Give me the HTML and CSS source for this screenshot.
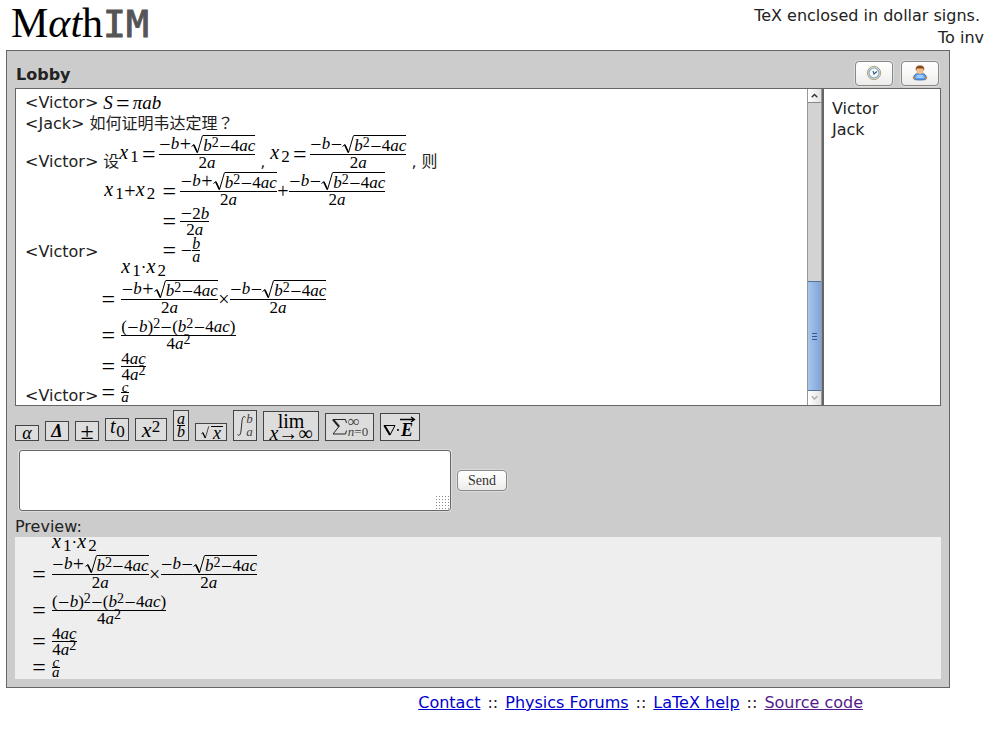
FILE: index.html
```html
<!DOCTYPE html>
<html lang="en">
<head>
<meta charset="utf-8">
<title>MathIM</title>
<link rel="stylesheet" href="styles.css">
</head>
<body>
<svg class="defs" aria-hidden="true">
  <symbol id="surd" viewBox="0 0 12 19"><path d="M0.5 11.5 3 9.5 6.5 17.5 11.5 0.5" fill="none" stroke="#000" stroke-width="1"/><path d="M2.8 10 6.3 17.5" stroke="#000" stroke-width="1.6"/></symbol>
</svg>
<header class="top">
  <h1 class="logo">M<i>αt</i>h<span class="im">IM</span></h1>
  <p class="tips"><span class="tip">TeX enclosed in dollar signs.</span><span>To inv</span></p>
</header>

<main class="panel">
  <div class="bar">
    <h2>Lobby</h2>
    <button class="btn icon" type="button" aria-label="Timestamps">
      <svg width="16" height="16" viewBox="0 0 16 16"><circle cx="8" cy="8" r="6.7" fill="#d8e6ee" stroke="#b9a274" stroke-width="1"/><circle cx="8" cy="8" r="5" fill="#f4fafd" stroke="#86a9bd" stroke-width="1.2"/><path d="M7 6 8 9 11 6.500" fill="none" stroke="#456" stroke-width="1.1"/></svg>
    </button>
    <button class="btn icon" type="button" aria-label="Nickname">
      <svg width="16" height="16" viewBox="0 0 16 16"><path d="M1.500 13C1.500 10 4 8.500 6 8.500h4c2 0 4.500 1.500 4.500 4.500 0 1.500-2 2-6.500 2s-6.500-.5-6.500-2z" fill="#5a9bea" stroke="#2f62ae" stroke-width=".8"/><path d="M5 10h6l1 3H4z" fill="#9accff"/><circle cx="2" cy="13" r="1.300" fill="#c98a4c"/><circle cx="14" cy="13" r="1.300" fill="#c98a4c"/><rect x="4.500" y="2" width="7" height="7" rx="3" fill="#f0bd8c"/><path d="M4 6C3 2 5 .5 8 .5S13 2 12 6l-1-2.500H5z" fill="#8a4b17"/></svg>
    </button>
  </div>

  <div class="room">
    <div class="chat">
      <div class="log">
        <div class="msg"><span class="nick">&lt;Victor&gt;</span><span class="m large"><i>S</i><b class="eq">=</b><i>πab</i></span></div>
        <div class="msg"><span class="nick">&lt;Jack&gt;</span><span>如何证明韦达定理<span class="mark">？</span></span></div>
        <div class="msg tall"><span class="nick low">&lt;Victor&gt;</span><span class="low">设</span>
          <span class="m"><span class="v"><i>x</i><sub>1</sub></span><b class="eq">=</b><span class="frac"><span class="num"><b>−</b><i>b</i><b>+</b><svg class="surd"><use href="#surd"/></svg><span class="rad"><i>b</i><sup>2</sup><b>−</b>4<i>ac</i></span></span><span class="den">2<i>a</i></span></span></span>
          <span class="comma low">,</span>
          <span class="m"><span class="v"><i>x</i><sub>2</sub></span><b class="eq">=</b><span class="frac"><span class="num"><b>−</b><i>b</i><b>−</b><svg class="surd"><use href="#surd"/></svg><span class="rad"><i>b</i><sup>2</sup><b>−</b>4<i>ac</i></span></span><span class="den">2<i>a</i></span></span></span>
          <span class="comma low">,</span><span class="low">则</span>
        </div>
        <div class="msg block"><span class="nick">&lt;Victor&gt;</span>
          <div class="align sum">
            <span class="m h26"><span class="v"><i>x</i><sub>1</sub></span><b>+</b><span class="v"><i>x</i><sub>2</sub></span></span><b class="eq m">=</b>
            <span class="m h26"><span class="frac"><span class="num"><b>−</b><i>b</i><b>+</b><svg class="surd"><use href="#surd"/></svg><span class="rad"><i>b</i><sup>2</sup><b>−</b>4<i>ac</i></span></span><span class="den">2<i>a</i></span></span><b>+</b><span class="frac"><span class="num"><b>−</b><i>b</i><b>−</b><svg class="surd"><use href="#surd"/></svg><span class="rad"><i>b</i><sup>2</sup><b>−</b>4<i>ac</i></span></span><span class="den">2<i>a</i></span></span></span>
            <span></span><b class="eq m">=</b><span class="m h34"><span class="frac mid"><span class="num"><b>−</b>2<i>b</i></span><span class="den">2<i>a</i></span></span></span>
            <span></span><b class="eq m">=</b><span class="m h24"><b>−</b><span class="frac small"><span class="num"><i>b</i></span><span class="den"><i>a</i></span></span></span>
          </div>
        </div>
        <div class="msg block"><span class="nick">&lt;Victor&gt;</span>
          <div class="align">
            <span></span><span class="m h12"><span class="v"><i>x</i><sub>1</sub></span><span>·</span><span class="v"><i>x</i><sub>2</sub></span></span>
            <b class="eq m">=</b><span class="m h50"><span class="frac"><span class="num"><b>−</b><i>b</i><b>+</b><svg class="surd"><use href="#surd"/></svg><span class="rad"><i>b</i><sup>2</sup><b>−</b>4<i>ac</i></span></span><span class="den">2<i>a</i></span></span><b>×</b><span class="frac"><span class="num"><b>−</b><i>b</i><b>−</b><svg class="surd"><use href="#surd"/></svg><span class="rad"><i>b</i><sup>2</sup><b>−</b>4<i>ac</i></span></span><span class="den">2<i>a</i></span></span></span>
            <b class="eq m">=</b><span class="m h22"><span class="frac"><span class="num">(<b>−</b><i>b</i>)<sup>2</sup><b>−</b>(<i>b</i><sup>2</sup><b>−</b>4<i>ac</i>)</span><span class="den">4<i>a</i><sup>2</sup></span></span></span>
            <b class="eq m">=</b><span class="m h40"><span class="frac mid"><span class="num">4<i>ac</i></span><span class="den">4<i>a</i><sup>2</sup></span></span></span>
            <b class="eq m">=</b><span class="m h12"><span class="frac tiny"><span class="num"><i>c</i></span><span class="den"><i>a</i></span></span></span>
          </div>
        </div>
      </div>
      <div class="scroll" aria-hidden="true">
        <svg class="arrow up" viewBox="0 0 14 14"><path d="M4 9 7 6l3 3" fill="none" stroke="#333" stroke-width="1.5"/></svg>
        <div class="track"></div>
        <div class="thumb"></div>
        <svg class="arrow down" viewBox="0 0 14 14"><path d="M4 5l3 3 3-3" fill="none" stroke="#aaa" stroke-width="1.5"/></svg>
      </div>
    </div>
    <ul class="users"><li>Victor</li><li>Jack</li></ul>
  </div>

  <div class="symbols">
    <button class="w24 s16" type="button"><i>α</i></button>
    <button class="w24 s20" type="button"><i class="strong">Δ</i></button>
    <button class="w24 s20 big" type="button">±</button>
    <button class="w24 s23" type="button"><span class="v"><i>t</i><sub>0</sub></span></button>
    <button class="w32 s23 med" type="button"><i>x</i><sup>2</sup></button>
    <button class="w16 s31" type="button"><span class="frac small"><span class="num"><i>a</i></span><span class="den"><i>b</i></span></span></button>
    <button class="w32 s18" type="button"><svg class="surd short" preserveAspectRatio="none"><use href="#surd"/></svg><span class="rad short"><i>x</i></span></button>
    <button class="w24 s31" type="button"><svg width="9" height="22" viewBox="0 0 9 22"><path d="M8.500 2.500C7 0 5.500 2 5 6L4 16c-.5 4-2 5.500-3.500 3.500" fill="none" stroke="#333"/></svg><span class="limits"><i>b</i><i>a</i></span></button>
    <button class="w56 s30" type="button"><span class="lim"><span>lim</span><span class="to"><i>x</i>→∞</span></span></button>
    <button class="w49 s28" type="button"><svg width="17" height="18" viewBox="0 0 17 18"><path d="M15.500 5 14.500 1.500H2L8 8.500 2 16h12.500l1-3.500" fill="none" stroke="#222"/><path d="M2 1.500 8 8.500" stroke="#222" stroke-width="2"/></svg><span class="limits"><span class="inf">∞</span><span><i>n</i>=0</span></span></button>
    <button class="w40 s28" type="button"><svg width="36" height="24" viewBox="0 0 36 24"><path d="M2 10.500h11L8 20z" fill="none" stroke="#000"/><path d="M2.500 10.500 8 20" stroke="#000" stroke-width="2"/><path d="M15 15h2M18 4.500h14M29 2l3.500 2.500L29 7" fill="none" stroke="#000" stroke-width="1.300"/><text class="vec" x="19" y="21">E</text></svg></button>
  </div>

  <form class="compose">
    <textarea aria-label="Message"></textarea>
    <button class="btn send" type="button">Send</button>
  </form>

  <div class="label">Preview:</div>
  <div class="preview">
    <div class="align">
      <span></span><span class="m h12"><span class="v"><i>x</i><sub>1</sub></span><span>·</span><span class="v"><i>x</i><sub>2</sub></span></span>
      <b class="eq m">=</b><span class="m h50"><span class="frac"><span class="num"><b>−</b><i>b</i><b>+</b><svg class="surd"><use href="#surd"/></svg><span class="rad"><i>b</i><sup>2</sup><b>−</b>4<i>ac</i></span></span><span class="den">2<i>a</i></span></span><b>×</b><span class="frac"><span class="num"><b>−</b><i>b</i><b>−</b><svg class="surd"><use href="#surd"/></svg><span class="rad"><i>b</i><sup>2</sup><b>−</b>4<i>ac</i></span></span><span class="den">2<i>a</i></span></span></span>
      <b class="eq m">=</b><span class="m h22"><span class="frac"><span class="num">(<b>−</b><i>b</i>)<sup>2</sup><b>−</b>(<i>b</i><sup>2</sup><b>−</b>4<i>ac</i>)</span><span class="den">4<i>a</i><sup>2</sup></span></span></span>
      <b class="eq m">=</b><span class="m h40"><span class="frac mid"><span class="num">4<i>ac</i></span><span class="den">4<i>a</i><sup>2</sup></span></span></span>
      <b class="eq m">=</b><span class="m h12"><span class="frac tiny"><span class="num"><i>c</i></span><span class="den"><i>a</i></span></span></span>
    </div>
  </div>
</main>

<footer><a href="#contact">Contact</a><span>::</span><a href="#forums">Physics Forums</a><span>::</span><a href="#help">LaTeX help</a><span>::</span><a class="seen" href="#source">Source code</a></footer>
</body>
</html>
```
FILE: styles.css
```css
* { box-sizing: border-box; }
body {
  margin: 0;
  background: #fff;
  color: #222;
  font: 16px/21px "DejaVu Sans", "Noto Sans CJK SC", sans-serif;
  overflow: hidden;
}
h1, h2, p, ul { margin: 0; padding: 0; }
button { color: #000; padding: 0; }
.defs { display: none; }

/* header */
.top { display: flex; justify-content: space-between; height: 50px; }
.logo { padding-left: 11px; font: 42px/46px "Liberation Serif", serif; color: #000; }
.im { color: #555; font: 38px/46px "DejaVu Sans Mono", monospace; -webkit-text-stroke: 1px #555; }
.tips { display: flex; flex-direction: column; align-items: flex-end; padding-top: 5px; line-height: 22px; white-space: nowrap; }
.tip { padding-right: 4px; }

/* main panel */
.panel { margin: 0 34px 0 6px; padding: 0 8px 8px; border: 1px solid #666; background: #ccc; }
.bar { display: flex; gap: 8px; height: 37px; padding: 10px 2px 0 0; }
.bar h2 { flex: 1; padding: 3px 0 0 1px; font-size: 16px; line-height: 21px; }
.btn {
  border: 1px solid #888;
  border-radius: 4px;
  background: linear-gradient(#fff, #f8f8f7 50%, #ecebe9);
  box-shadow: 0 0 0 1px #dcdcdc;
}
.icon { display: flex; align-items: center; justify-content: center; width: 38px; height: 25px; }
.icon svg { margin-bottom: 2px; }

.room { display: grid; grid-template-columns: 1fr 118px; height: 318px; }
.chat { display: flex; border: 1px solid #666; background: #fff; overflow: hidden; }
.log { flex: 1; padding: 3px 0 0 9px; }
.users { list-style: none; padding: 9px 8px; border: 1px solid #666; background: #fff; }

.scroll { display: flex; flex-direction: column; width: 15px; border: 1px solid #999; border-width: 0 1px; }
.arrow { flex: none; width: 13px; height: 14px; background: linear-gradient(90deg, #fff, #e4e3e1); }
.up { border-bottom: 1px solid #888; }
.track { flex: 1; background: #d4d3d1; }
.thumb {
  height: 110px;
  border: 1px solid #557399;
  border-width: 1px 0;
  background:
    linear-gradient(#335a90, #335a90) center 51px / 5px 1px no-repeat,
    linear-gradient(#335a90, #335a90) center 54px / 5px 1px no-repeat,
    linear-gradient(#335a90, #335a90) center 57px / 5px 1px no-repeat,
    linear-gradient(90deg, #a8c6ed, #7ea4d9);
}

/* messages */
.msg { display: flex; align-items: center; height: 21px; white-space: nowrap; }
.nick { flex: none; margin-right: 5px; }
.mark { font-family: "Noto Sans CJK TC", sans-serif; line-height: 16px; }
.tall { height: 40px; margin-bottom: 4px; }
.low { padding-top: 14px; }
.comma { padding-left: 5px; width: 15px; }
.block { height: auto; align-items: flex-end; }
.block .nick { margin-right: 3px; }

/* formulas */
.m, .symbols { color: #000; font: 17px/16px "Liberation Serif", serif; }
.m { display: inline-flex; align-items: center; }
.m b, .m.eq { font-weight: normal; }
.m b { width: 12px; text-align: center; font-size: 20px; }
.large { font-size: 19px; }
.eq, .m .eq { font-size: 24px; font-weight: normal; width: 14px; justify-content: center; }
.m .eq { margin: 0 3px; }
.v { display: inline-flex; }
.v i { width: 11px; font-size: 20px; }
sub { font-size: 17px; line-height: 16px; padding-top: 5px; vertical-align: baseline; }
sup { font-size: 14px; line-height: 8px; vertical-align: baseline; align-self: flex-start; }
.frac { display: inline-grid; grid-template-rows: 19px 1px 19px; justify-items: center; }
.frac::before { content: ""; grid-row: 2; justify-self: stretch; background: #000; }
.num { grid-row: 1; align-self: end; display: flex; align-items: center; }
.den { grid-row: 3; display: flex; }
.num b { font-weight: normal; }
.mid { grid-template-rows: 15px 1px 15px; line-height: 15px; }
.small { grid-template-rows: 12px 1px 12px; font-size: 16px; line-height: 12px; }
.tiny { grid-template-rows: 9px 1px 9px; font-size: 15px; line-height: 9px; }
.rad { display: flex; align-items: center; height: 19px; padding-top: 2px; border-top: 1px solid #000; }
.rad sup, .num > sup { padding-top: 1px; }
.surd { width: 12px; height: 19px; flex: none; }
.align { display: grid; grid-template-columns: 14px auto; column-gap: 6px; justify-items: start; padding-bottom: 8px; }
.sum { grid-template-columns: 54px 14px auto; column-gap: 4px; padding: 0 0 0 3px; }
.h12 { height: 12px; } .h22 { height: 22px; } .h24 { height: 24px; } .h26 { height: 26px; }
.h34 { height: 34px; } .h40 { height: 40px; } .h50 { height: 50px; }
.align > .eq { align-self: center; height: 12px; }

/* symbol menu */
.symbols { display: flex; align-items: flex-end; gap: 6px; height: 35px; }
.symbols button {
  display: flex; align-items: center; justify-content: center;
  border: 1px solid #444; background: #ddd; font: 18px/14px "Liberation Serif", serif;
}
.w16 { width: 16px; } .w24 { width: 24px; } .w32 { width: 32px; } .w40 { width: 40px; } .w49 { width: 49px; } .w56 { width: 56px; }
.s16 { height: 16px; } .s18 { height: 18px; } .s20 { height: 20px; } .s23 { height: 23px; }
.s28 { height: 28px; } .s30 { height: 30px; } .s31 { height: 31px; }
.symbols .big { font-size: 24px; }
.symbols .med { font-size: 22px; }
.med sup { font-size: 17px; line-height: 16px; }
.strong { font-weight: bold; }
.symbols .v i { width: 7px; }
.surd.short { height: 13px; }
.rad.short { height: 13px; padding: 0 2px; }
.limits { display: flex; flex-direction: column; justify-content: space-between; align-self: stretch; padding: 3px 0; font-size: 13px; line-height: 10px; text-align: left; color: #444; }
.inf { font-size: 17px; }
.lim { display: flex; flex-direction: column; align-items: center; font-size: 20px; line-height: 14px; }
.to { font-size: 20px; line-height: 11px; }
.vec { font: italic bold 18px "Liberation Serif", serif; }

/* composer */
.compose { display: flex; align-items: center; gap: 6px; padding: 9px 4px 0; }
textarea { width: 432px; height: 61px; border: 1px solid #666; border-radius: 3px; background: #fff; box-shadow: 0 0 0 1px #ddd; resize: both; }
textarea::-webkit-resizer {
  background: conic-gradient(from 315deg at 100% 100%, transparent 0 0), radial-gradient(circle, #888 1px, transparent 1px) 0 0 / 3px 3px;
  clip-path: polygon(100% 0, 100% 100%, 0 100%);
}
.send { width: 50px; height: 21px; font: 14px/16px "Liberation Serif", serif; color: #333; }
.label { padding-top: 6px; line-height: 20px; }
.preview { height: 142px; padding-left: 17px; background: #eee; overflow: hidden; }

footer { display: flex; justify-content: flex-end; gap: 7px; padding: 4px 121px 0 0; }
a { color: #00c; }
.seen { color: #551a8b; }
```
